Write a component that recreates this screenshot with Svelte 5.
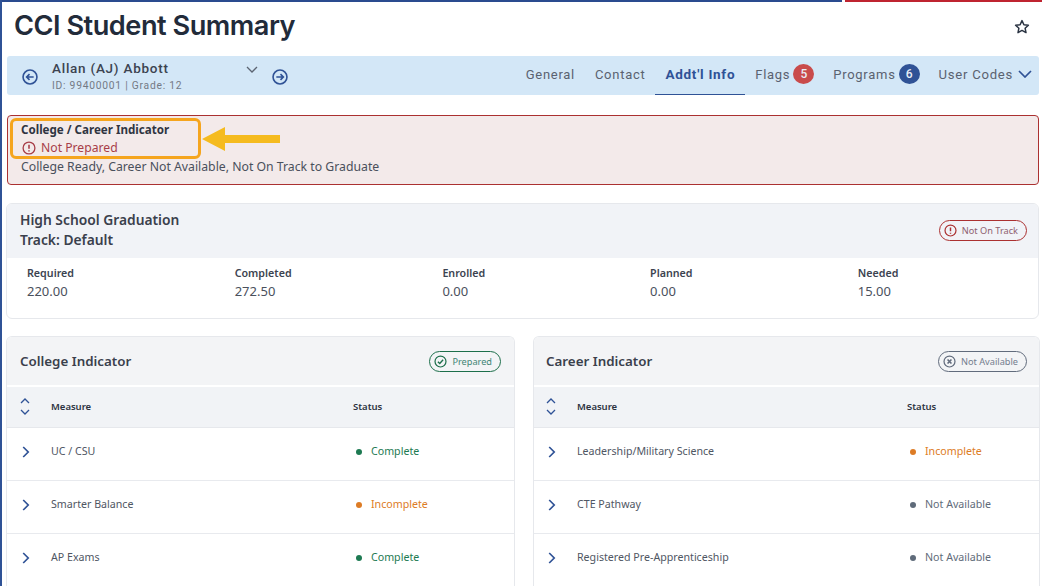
<script>
  const college = [
    { name: 'UC / CSU', status: 'Complete', tone: 'green' },
    { name: 'Smarter Balance', status: 'Incomplete', tone: 'orange' },
    { name: 'AP Exams', status: 'Complete', tone: 'green' }
  ];
  const career = [
    { name: 'Leadership/Military Science', status: 'Incomplete', tone: 'orange' },
    { name: 'CTE Pathway', status: 'Not Available', tone: 'gray' },
    { name: 'Registered Pre-Apprenticeship', status: 'Not Available', tone: 'gray' }
  ];
  const grad = [
    ['Required', '220.00'],
    ['Completed', '272.50'],
    ['Enrolled', '0.00'],
    ['Planned', '0.00'],
    ['Needed', '15.00']
  ];
  const panels = [
    { title: 'College Indicator', pill: 'Prepared', pillTone: 'green', statusCol: 'col-a', rows: college },
    { title: 'Career Indicator', pill: 'Not Available', pillTone: 'gray', statusCol: 'col-b', rows: career }
  ];
</script>

{#snippet alertIcon(size)}
  <svg width={size} height={size} viewBox="0 0 16 16" fill="none" stroke="currentColor" stroke-width="1.5" aria-hidden="true">
    <circle cx="8" cy="8" r="6.75" />
    <path d="M8 4.2v4.6M8 10.7v1.2" stroke-width="1.8" />
  </svg>
{/snippet}

{#snippet circleArrow(flip)}
  <svg class="circle-arrow" class:flip width="16" height="16" viewBox="0 0 17 17" fill="none" stroke="currentColor" stroke-width="1.7" aria-hidden="true">
    <circle cx="8.5" cy="8.5" r="7.4" />
    <path d="M12.4 8.5H5M8 5.4 4.9 8.5 8 11.6" />
  </svg>
{/snippet}

<div class="page">
  <div class="topline"><span class="blue"></span><span class="red"></span></div>
  <div class="content">
    <header class="title-row">
      <h1>CCI Student Summary</h1>
      <svg class="star" width="16" height="16" viewBox="0 0 16 16" fill="none" stroke="#2b3443" stroke-width="1.5" stroke-linejoin="round" aria-hidden="true">
        <path d="M8 1.6 9.9 5.7l4.5.5-3.3 3 .9 4.4L8 11.4l-4 2.2.9-4.4-3.3-3 4.5-.5z" />
      </svg>
    </header>

    <nav class="student-bar">
      <div class="student">
        {@render circleArrow(false)}
        <div class="who">
          <div class="name">Allan (AJ) Abbott</div>
          <div class="meta">ID: 99400001 | Grade: 12</div>
        </div>
        <svg class="who-caret" width="12" height="7" viewBox="0 0 12 7" fill="none" stroke="#5b6472" stroke-width="1.3" aria-hidden="true"><path d="M1 1l5 5 5-5" /></svg>
        {@render circleArrow(true)}
      </div>
      <div class="tabs">
        <span class="tab">General</span>
        <span class="tab">Contact</span>
        <span class="tab active">Addt'l Info</span>
        <span class="tab tight">Flags <b class="count red-count">5</b></span>
        <span class="tab tight">Programs <b class="count blue-count">6</b></span>
        <span class="tab last">User Codes
          <svg width="14" height="8" viewBox="0 0 14 8" fill="none" stroke="#2f5296" stroke-width="1.7" aria-hidden="true"><path d="M1 1l6 6 6-6" /></svg>
        </span>
      </div>
    </nav>

    <section class="alert">
      <div class="highlight-wrap">
        <div class="highlight">
          <div class="alert-title">College / Career Indicator</div>
          <div class="alert-status">{@render alertIcon(14)}<span>Not Prepared</span></div>
        </div>
        <svg class="pointer" width="80" height="26" viewBox="0 0 80 26" aria-hidden="true">
          <path d="M1 13 24 1v8h55v8H24v8z" fill="#f5bb1f" />
        </svg>
      </div>
      <div class="alert-text">College Ready, Career Not Available, Not On Track to Graduate</div>
    </section>

    <section class="card grad">
      <div class="grad-head">
        <div class="grad-title">High School Graduation<br />Track: Default</div>
        <span class="pill red-pill">{@render alertIcon(13)}<span class="pill-text">Not On Track</span></span>
      </div>
      <div class="grad-stats">
        {#each grad as [label, value]}
          <div class="stat">
            <div class="stat-label">{label}</div>
            <div class="stat-value">{value}</div>
          </div>
        {/each}
      </div>
    </section>

    <div class="panels">
      {#each panels as panel}
        <section class="card panel">
          <div class="panel-head">
            <h2>{panel.title}</h2>
            {#if panel.pillTone === 'green'}
              <span class="pill green-pill">
                <svg width="13" height="13" viewBox="0 0 16 16" fill="none" stroke="currentColor" stroke-width="1.5" aria-hidden="true"><circle cx="8" cy="8" r="6.75" /><path d="M4.8 8.2 7.1 10.4 11.2 5.9" stroke-width="1.7" /></svg>
                <span class="pill-text">{panel.pill}</span>
              </span>
            {:else}
              <span class="pill gray-pill">
                <svg width="13" height="13" viewBox="0 0 16 16" fill="none" stroke="currentColor" stroke-width="1.5" aria-hidden="true"><circle cx="8" cy="8" r="6.75" /><path d="M5.6 5.6l4.8 4.8M10.4 5.6l-4.8 4.8" stroke-width="2" /></svg>
                <span class="pill-text">{panel.pill}</span>
              </span>
            {/if}
          </div>
          <div class="row thead {panel.statusCol}">
            <svg class="sort" width="10" height="17" viewBox="0 0 10 17" fill="none" stroke="#2f5296" stroke-width="1.3" aria-hidden="true"><path d="M1 5l4-4 4 4M1 12l4 4 4-4" /></svg>
            <span class="th">Measure</span>
            <span class="th">Status</span>
          </div>
          {#each panel.rows as row}
            <div class="row body-row {panel.statusCol}">
              <svg class="chev" width="8" height="12" viewBox="0 0 8 12" fill="none" stroke="#2f5296" stroke-width="1.7" aria-hidden="true"><path d="M1.2 1l5 5-5 5" /></svg>
              <span class="measure">{row.name}</span>
              <span class="status {row.tone}"><i class="dot"></i>{row.status}</span>
            </div>
          {/each}
        </section>
      {/each}
    </div>
  </div>
</div>

<style>
  :global(body) {
    margin: 0;
    background: #fff;
  }
  .page {
    height: 586px;
    overflow: hidden;
    font-family: "Noto Sans", sans-serif;
    color: #3c4350;
    box-sizing: border-box;
    border-left: 2px solid #2f5296;
  }
  .topline {
    display: flex;
    height: 2px;
    margin-left: -2px;
    gap: 3px;
  }
  .blue { width: 842px; background: #2a4b8f; }
  .red { flex: 1; background: #bf2430; }
  .content {
    padding: 0 3px 0 5px;
  }
  .title-row {
    height: 54px;
    display: flex;
    align-items: center;
    justify-content: space-between;
  }
  h1 {
    margin: 0 0 6px 7px;
    font: 600 27.2px/1 "Inter", sans-serif;
    letter-spacing: -0.5px;
    color: #222b3a;
  }
  .star { margin-right: 9px; margin-bottom: 4px; }
  .student-bar {
    height: 39px;
    background: #d3e7f7;
    border-radius: 3px;
    display: flex;
    justify-content: space-between;
    align-items: stretch;
    font-family: "Roboto", sans-serif;
  }
  .student {
    display: flex;
    align-items: center;
    padding-left: 14.5px;
  }
  .circle-arrow { color: #2f5296; margin-top: 2px; flex: none; }
  .circle-arrow.flip { transform: scaleX(-1); }
  .who { width: 193.5px; margin-left: 14.5px; }
  .name {
    font-size: 13.5px;
    font-weight: 500;
    line-height: 16px;
    letter-spacing: 0.75px;
    color: #3c4350;
  }
  .meta {
    font-size: 10.3px;
    line-height: 13px;
    letter-spacing: 0.75px;
    color: #737a85;
    margin-top: 3px;
  }
  .who-caret { margin: -13px 14px 0 0; }
  .tabs {
    display: flex;
    align-items: stretch;
    padding-right: 7px;
  }
  .tab {
    display: flex;
    align-items: center;
    gap: 3px;
    padding: 0 10px;
    font-size: 13px;
    letter-spacing: 0.72px;
    color: #5a6270;
    white-space: nowrap;
    border-bottom: 1px solid transparent;
    padding-bottom: 2px;
  }
  .tab.active {
    color: #2f5296;
    font-weight: 700;
    font-size: 13.5px;
    border-bottom-color: #2f5296;
  }
  .tab.tight { margin-right: -1px; }
  .tab.last { gap: 5px; padding-right: 0; font-size: 13.15px; }
  .count {
    width: 21px;
    height: 20px;
    border-radius: 50%;
    color: #e9eef5;
    font-size: 12px;
    font-weight: 500;
    letter-spacing: 0;
    display: grid;
    place-items: center;
  }
  .red-count { background: #c94b4b; }
  .blue-count { background: #2f5296; }

  .alert {
    margin-top: 20px;
    height: 70px;
    box-sizing: border-box;
    background: #f3eaea;
    border: 1px solid #ab3131;
    border-radius: 4px;
    padding: 2px 0 0 2px;
  }
  .highlight-wrap {
    display: flex;
    align-items: center;
  }
  .highlight {
    box-sizing: border-box;
    width: 191px;
    height: 41px;
    border: 3px solid #f5a51e;
    border-radius: 6px;
    padding: 1px 0 0 8px;
  }
  .alert-title {
    font-size: 11.6px;
    font-weight: 700;
    line-height: 16px;
    color: #2f3542;
  }
  .alert-status {
    display: flex;
    align-items: center;
    gap: 5px;
    font-size: 12.2px;
    line-height: 19px;
    color: #a83e48;
    margin-left: 1px;
  }
  .alert-text {
    font-size: 12.25px;
    line-height: 17px;
    margin: -1px 0 0 11px;
    color: #4a505c;
  }
  .card {
    box-sizing: border-box;
    background: #fff;
    border: 1px solid #e6e8ec;
    border-radius: 6px;
    overflow: hidden;
  }
  .grad {
    margin: 18px 0 0 -1px;
    height: 116px;
  }
  .grad-head {
    height: 54px;
    box-sizing: border-box;
    background: #f1f3f7;
    display: flex;
    align-items: center;
    justify-content: space-between;
    padding: 0 11px 2px 13px;
  }
  .grad-title {
    font-size: 13.8px;
    font-weight: 600;
    line-height: 20px;
    color: #3a404c;
  }
  .pill {
    display: inline-flex;
    align-items: center;
    gap: 5px;
    height: 21px;
    box-sizing: border-box;
    border: 1px solid currentColor;
    border-radius: 11px;
    font-size: 9.2px;
    padding: 0 8px 0 4px;
    white-space: nowrap;
  }
  .red-pill { color: #ab3131; }
  .red-pill .pill-text { color: #8f5f70; }
  .green-pill { color: #1d6f4b; }
  .green-pill .pill-text { color: #3f8575; }
  .gray-pill { color: #616b7c; }
  .gray-pill .pill-text { color: #747d8e; }
  .grad-stats {
    display: grid;
    grid-template-columns: repeat(5, 207.7px);
    padding: 8px 0 0 20px;
  }
  .stat-label {
    font-size: 10.7px;
    font-weight: 600;
    line-height: 15px;
    color: #3c4350;
  }
  .stat-value {
    font-size: 13px;
    line-height: 20px;
    color: #4a505c;
  }
  .panels {
    display: grid;
    grid-template-columns: 508px 507px;
    gap: 18px;
    margin-top: 17px;
  }
  .panel { height: 260px; border-bottom: 0; }
  .panel:first-child { margin-left: -1px; }
  .panel-head {
    height: 48px;
    box-sizing: content-box;
    background: #f3f4f6;
    display: flex;
    align-items: center;
    justify-content: space-between;
    padding: 0 12px 0 13px;
    border-bottom: 2px solid #fff;
  }
  .panel:first-child .panel-head { padding: 0 13px 0 14px; }
  h2 {
    margin: 0 0 1px -1px;
    font-size: 13.35px;
    font-weight: 600;
    color: #3a404c;
  }
  .row {
    display: grid;
    align-items: center;
    padding-left: 12px;
  }
  .panel:first-child .row { padding-left: 13px; }
  .col-a { grid-template-columns: 31px 302px 1fr; }
  .col-b { grid-template-columns: 31px 330px 1fr; }
  .thead {
    height: 41px;
    box-sizing: border-box;
    background: #f1f3f6;
    border-bottom: 1px solid #e6e8ec;
    padding-bottom: 2px;
  }
  .th {
    font-size: 9.5px;
    font-weight: 600;
    color: #2b3240;
  }
  .body-row {
    height: 53px;
    box-sizing: border-box;
    border-bottom: 1px solid #e8eaee;
    padding-bottom: 7px;
  }
  .chev { margin: 2px 0 0 1.5px; }
  .measure {
    font-size: 10.65px;
    color: #4f5663;
  }
  .status {
    display: flex;
    align-items: center;
    gap: 9px;
    font-size: 10.65px;
    padding-left: 1px;
  }
  .dot {
    width: 6px;
    height: 6px;
    border-radius: 50%;
    background: currentColor;
    margin: 2px 0 0 2px;
  }
  .green { color: #1d7a52; }
  .orange { color: #dd7c25; }
  .gray { color: #5f6b7a; }
  .gray .dot { background: #5f6b7a; }
</style>
